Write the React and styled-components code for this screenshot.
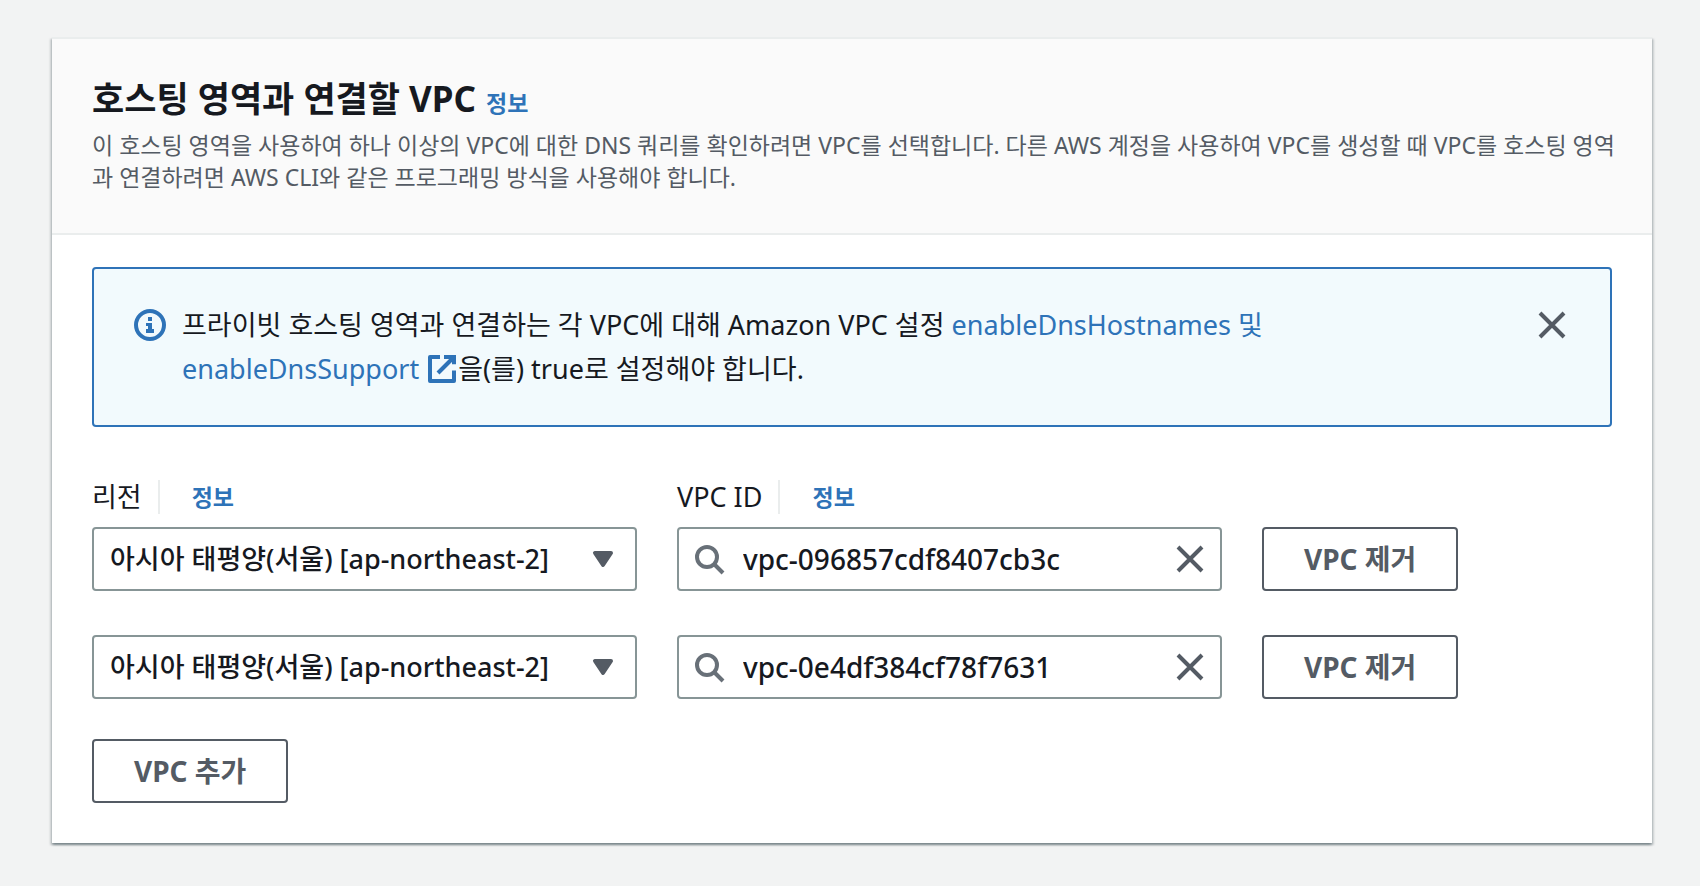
import React, { useState } from 'react'
import styled, { createGlobalStyle } from 'styled-components'

const REGION = '아시아 태평양(서울) [ap-northeast-2]'

const initialVpcs = [
  { id: 1, vpcId: 'vpc-096857cdf8407cb3c' },
  { id: 2, vpcId: 'vpc-0e4df384cf78f7631' },
]

const InfoIcon = () => (
  <Icon viewBox="0 0 16 16" aria-hidden="true">
    <circle cx="8" cy="8" r="7" />
    <path className="filled" d="M7 4h2v2H7z M6 7h3v3h1v2H6v-2h1V8.5H6z" />
  </Icon>
)

const ExternalIcon = () => (
  <Icon viewBox="0 0 16 16" aria-hidden="true">
    <path strokeLinejoin="round" d="M14 8.8V14H2V2h5" />
    <path d="M9 2h5v3.6" />
    <path d="M6 10l8-8" />
  </Icon>
)

const SearchIcon = () => (
  <Icon viewBox="0 0 16 16" aria-hidden="true">
    <circle cx="7" cy="7" r="5" />
    <path d="M15 15l-4.5-4.5" />
  </Icon>
)

const CloseIcon = () => (
  <Icon viewBox="0 0 16 16" aria-hidden="true">
    <path d="M2 2l12 12M14 2L2 14" />
  </Icon>
)

const CaretIcon = () => (
  <Icon viewBox="0 0 16 16" aria-hidden="true">
    <path className="solid" strokeLinejoin="round" d="M4 5h8l-4 6z" />
  </Icon>
)

const App = () => {
  const [vpcs, setVpcs] = useState(initialVpcs)
  const [showAlert, setShowAlert] = useState(true)

  const updateVpc = (id, vpcId) =>
    setVpcs(vpcs.map((vpc) => (vpc.id === id ? { ...vpc, vpcId } : vpc)))
  const removeVpc = (id) => setVpcs(vpcs.filter((vpc) => vpc.id !== id))
  const addVpc = () => setVpcs([...vpcs, { id: Date.now(), vpcId: '' }])

  return (
    <Page>
      <GlobalStyle />
      <Card>
        <CardHeader>
          <TitleRow>
            <Title>호스팅 영역과 연결할 VPC</Title>
            <InfoLink href="#info">정보</InfoLink>
          </TitleRow>
          <Description>
            이 호스팅 영역을 사용하여 하나 이상의 VPC에 대한 DNS 쿼리를 확인하려면 VPC를
            선택합니다. 다른 AWS 계정을 사용하여 VPC를 생성할 때 VPC를 호스팅 영역과
            연결하려면 AWS CLI와 같은 프로그래밍 방식을 사용해야 합니다.
          </Description>
        </CardHeader>

        <CardBody>
          {showAlert && (
            <Alert role="status">
              <InfoIcon />
              <AlertText>
                프라이빗 호스팅 영역과 연결하는 각 VPC에 대해 Amazon VPC 설정{' '}
                <a href="#dns">
                  enableDnsHostnames 및 enableDnsSupport <ExternalIcon />
                </a>
                을(를) true로 설정해야 합니다.
              </AlertText>
              <IconButton
                type="button"
                aria-label="닫기"
                onClick={() => setShowAlert(false)}
              >
                <CloseIcon />
              </IconButton>
            </Alert>
          )}

          <LabelRow>
            <LabelGroup>
              <label htmlFor="region-0">리전</label>
              <Divider />
              <InfoLink href="#region">정보</InfoLink>
            </LabelGroup>
            <LabelGroup>
              <label htmlFor="vpc-0">VPC ID</label>
              <Divider />
              <InfoLink href="#vpc">정보</InfoLink>
            </LabelGroup>
          </LabelRow>

          <Rows>
            {vpcs.map((vpc, index) => (
              <VpcRow key={vpc.id}>
                <SelectBox>
                  <Select
                    id={`region-${index}`}
                    aria-label={index > 0 ? '리전' : undefined}
                  >
                    <option>{REGION}</option>
                  </Select>
                  <CaretIcon />
                </SelectBox>
                <SearchBox>
                  <SearchIcon />
                  <SearchInput
                    id={`vpc-${index}`}
                    type="text"
                    aria-label={index > 0 ? 'VPC ID' : undefined}
                    value={vpc.vpcId}
                    onChange={(e) => updateVpc(vpc.id, e.target.value)}
                  />
                  <IconButton
                    type="button"
                    aria-label="지우기"
                    onClick={() => updateVpc(vpc.id, '')}
                  >
                    <CloseIcon />
                  </IconButton>
                </SearchBox>
                <ButtonCell>
                  <Button type="button" onClick={() => removeVpc(vpc.id)}>
                    VPC 제거
                  </Button>
                </ButtonCell>
              </VpcRow>
            ))}
          </Rows>

          <Button type="button" onClick={addVpc}>
            VPC 추가
          </Button>
        </CardBody>
      </Card>
    </Page>
  )
}

const GlobalStyle = createGlobalStyle`
  :root {
    --text: #16191f;
    --grey: #545b64;
    --blue: #2e73b8;
    --line: #eaeded;
    --field: #879596;
  }

  * {
    box-sizing: border-box;
  }

  body {
    margin: 0;
    background: #f2f3f3;
    color: var(--text);
    font-family: 'Noto Sans', 'Noto Sans CJK KR', sans-serif;
    font-size: 27px;
    line-height: 44px;
  }

  a {
    color: var(--blue);
    text-decoration: none;

    &:hover {
      text-decoration: underline;
    }
  }

  button,
  input,
  select {
    font-family: inherit;
    color: inherit;
  }
`

const Icon = styled.svg`
  flex: none;
  width: 32px;
  height: 32px;
  fill: none;
  stroke: currentColor;
  stroke-width: 2;

  .filled {
    fill: currentColor;
    stroke: none;
  }

  .solid {
    fill: currentColor;
  }
`

const Page = styled.main`
  padding: 37px 48px 43px 52px;
`

const Card = styled.section`
  background: #fff;
  border-top: 2px solid var(--line);
  box-shadow:
    0 2px 2px 0 rgba(0, 28, 36, 0.3),
    2px 2px 2px 0 rgba(0, 28, 36, 0.15),
    -2px 2px 2px 0 rgba(0, 28, 36, 0.15);
`

const CardHeader = styled.header`
  padding: 38px 32px 40px 40px;
  background: #fafafa;
  border-bottom: 2px solid var(--line);
`

const TitleRow = styled.div`
  display: flex;
  align-items: baseline;
  gap: 10px;
  margin-bottom: 8px;
`

const Title = styled.h2`
  margin: 0;
  font-size: 35px;
  font-weight: 700;
  line-height: 44px;
`

const InfoLink = styled.a`
  font-size: 23px;
  font-weight: 700;
  line-height: 32px;
`

const Description = styled.p`
  margin: 0;
  color: var(--grey);
  font-size: 23px;
  line-height: 32px;
`

const CardBody = styled.div`
  padding: 32px 40px 40px;
`

const Alert = styled.div`
  display: flex;
  align-items: flex-start;
  margin-bottom: 48px;
  padding: 34px 42px 34px 40px;
  background: #f2fafd;
  border: 2px solid var(--blue);
  border-radius: 4px;

  > svg {
    margin: 6px 16px 6px 0;
    color: var(--blue);
  }

  > button {
    margin: 6px 0 6px 80px;
  }
`

const AlertText = styled.p`
  flex: 1;
  margin: 0;

  svg {
    vertical-align: -6px;
  }
`

const IconButton = styled.button`
  display: flex;
  flex: none;
  padding: 0;
  background: none;
  border: 0;
  color: var(--grey);
  cursor: pointer;
`

/* Fields span three of the eight columns, the remove button two */
const LabelRow = styled.div`
  display: grid;
  grid-template-columns: repeat(8, 1fr);
  column-gap: 40px;
  margin-bottom: 8px;
`

const LabelGroup = styled.div`
  display: flex;
  align-items: center;
  grid-column: span 3;
`

const Divider = styled.span`
  width: 2px;
  height: 34px;
  margin: 0 32px 0 16px;
  background: var(--line);
`

const Rows = styled.div`
  display: grid;
  row-gap: 44px;
  margin-bottom: 40px;
`

const VpcRow = styled.div`
  display: grid;
  grid-template-columns: repeat(8, 1fr);
  column-gap: 40px;
`

const SelectBox = styled.div`
  position: relative;
  grid-column: span 3;
  color: var(--grey);

  svg {
    position: absolute;
    top: 16px;
    right: 18px;
    pointer-events: none;
  }
`

const Select = styled.select`
  display: block;
  width: 100%;
  height: 64px;
  padding: 0 56px 2px 16px;
  appearance: none;
  background: #fff;
  border: 2px solid var(--field);
  border-radius: 4px;
  color: var(--text);
  font-size: 27px;
  font-weight: 500;
`

const SearchBox = styled.div`
  display: flex;
  align-items: center;
  grid-column: span 3;
  height: 64px;
  padding: 0 14px;
  border: 2px solid var(--field);
  border-radius: 4px;

  > svg {
    color: #687078;
  }
`

const SearchInput = styled.input`
  flex: 1;
  min-width: 0;
  padding: 0 18px;
  background: none;
  border: 0;
  outline: 0;
  font-size: 28px;
  font-weight: 500;
`

const ButtonCell = styled.div`
  grid-column: span 2;
`

const Button = styled.button`
  height: 64px;
  padding: 0 40px 2px;
  background: #fff;
  border: 2px solid var(--grey);
  border-radius: 4px;
  color: var(--grey);
  font-size: 28px;
  font-weight: 700;
  cursor: pointer;
`

export default App
